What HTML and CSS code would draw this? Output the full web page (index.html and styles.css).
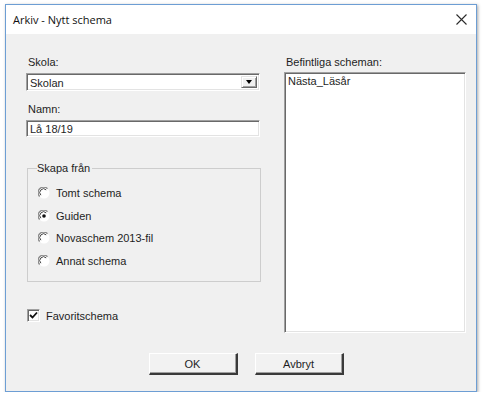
FILE: index.html
```html
<!DOCTYPE html>
<html lang="sv">
<head>
<meta charset="utf-8">
<title>Arkiv - Nytt schema</title>
<link rel="stylesheet" href="styles.css">
</head>
<body>
<div class="window">
  <div class="titlebar">
    <span class="title">Arkiv - Nytt schema</span>
    <svg class="close" width="11" height="11" viewBox="0 0 11 11"><path d="M0.5 0.5 L10.5 10.5 M10.5 0.5 L0.5 10.5" stroke="#2b2b2b" stroke-width="1.1" fill="none"/></svg>
  </div>
  <div class="body">
    <div class="main">
      <div class="left">
        <div class="label">Skola:</div>
        <div class="combo sunken">
          <span class="combo-text">Skolan</span>
          <span class="drop raised"><span class="tri"></span></span>
        </div>
        <div class="label label-namn">Namn:</div>
        <div class="input sunken">Lå 18/19</div>
        <fieldset class="group">
          <legend class="legend">Skapa från</legend>
          <div class="radio-row">
            <svg class="radio" width="12" height="12" viewBox="0 0 12 12"><circle cx="6" cy="6" r="5.5" fill="#fff"/><path d="M1.7 9.5 A5 5 0 0 1 9.5 1.7" stroke="#8a8a8a" stroke-width="1.3" fill="none"/><path d="M2.9 8.2 A3.6 3.6 0 0 1 8.2 2.9" stroke="#444" stroke-width="1" fill="none"/></svg>
            <span>Tomt schema</span>
          </div>
          <div class="radio-row">
            <svg class="radio" width="12" height="12" viewBox="0 0 12 12"><circle cx="6" cy="6" r="5.5" fill="#fff"/><path d="M1.7 9.5 A5 5 0 0 1 9.5 1.7" stroke="#8a8a8a" stroke-width="1.3" fill="none"/><path d="M2.9 8.2 A3.6 3.6 0 0 1 8.2 2.9" stroke="#444" stroke-width="1" fill="none"/><circle cx="6" cy="6" r="1.8" fill="#111"/></svg>
            <span>Guiden</span>
          </div>
          <div class="radio-row">
            <svg class="radio" width="12" height="12" viewBox="0 0 12 12"><circle cx="6" cy="6" r="5.5" fill="#fff"/><path d="M1.7 9.5 A5 5 0 0 1 9.5 1.7" stroke="#8a8a8a" stroke-width="1.3" fill="none"/><path d="M2.9 8.2 A3.6 3.6 0 0 1 8.2 2.9" stroke="#444" stroke-width="1" fill="none"/></svg>
            <span>Novaschem 2013-fil</span>
          </div>
          <div class="radio-row">
            <svg class="radio" width="12" height="12" viewBox="0 0 12 12"><circle cx="6" cy="6" r="5.5" fill="#fff"/><path d="M1.7 9.5 A5 5 0 0 1 9.5 1.7" stroke="#8a8a8a" stroke-width="1.3" fill="none"/><path d="M2.9 8.2 A3.6 3.6 0 0 1 8.2 2.9" stroke="#444" stroke-width="1" fill="none"/></svg>
            <span>Annat schema</span>
          </div>
        </fieldset>
        <div class="check-row">
          <span class="checkbox sunken">
            <svg width="9" height="9" viewBox="0 0 9 9"><path d="M1 4 L3.5 6.5 L8 1.5" stroke="#111" stroke-width="1.8" fill="none"/></svg>
          </span>
          <span>Favoritschema</span>
        </div>
      </div>
      <div class="right">
        <div class="label">Befintliga scheman:</div>
        <div class="listbox sunken">
          <div class="list-item">Nästa_Läsår</div>
        </div>
      </div>
    </div>
    <div class="footer">
      <div class="btn btn-ok">OK</div>
      <div class="btn btn-cancel">Avbryt</div>
    </div>
  </div>
</div>
</body>
</html>
```
FILE: styles.css
```css
html, body {
  margin: 0;
  padding: 0;
  background: #ffffff;
}

body {
  font-family: "Liberation Sans", Arial, sans-serif;
  font-size: 11px;
  color: #1e1e1e;
}

.window {
  margin: 4px 0 0 5px;
  width: 470px;
  height: 386px;
  border: 1px solid #6d9ed4;
  box-shadow: 1px 1px 3px rgba(0, 0, 0, 0.35);
  display: flex;
  flex-direction: column;
  background: #f0f0f0;
}

.titlebar {
  height: 29px;
  flex: none;
  background: #ffffff;
  display: flex;
  align-items: center;
  justify-content: space-between;
  padding: 0 9px 0 7px;
}

.title {
  font-family: "Open Sans", "Noto Sans", sans-serif;
  font-size: 11px;
  color: #111;
}

.close {
  display: block;
}

.body {
  flex: 1;
  display: flex;
  flex-direction: column;
  padding: 22px 10px 0 20px;
}

.main {
  display: grid;
  grid-template-columns: 235px 182px;
  column-gap: 23px;
}

.left {
  display: flex;
  flex-direction: column;
}

.label {
  height: 13px;
  line-height: 13px;
  margin-left: 2px;
}

.label-namn {
  margin-top: 12px;
}

.sunken {
  border: 1px solid;
  border-color: #a0a0a0 #ffffff #ffffff #a0a0a0;
  box-shadow: inset 1px 1px 0 #696969, inset -1px -1px 0 #e3e3e3;
  background: #ffffff;
}

.raised {
  border: 1px solid;
  border-color: #e3e3e3 #696969 #696969 #e3e3e3;
  box-shadow: inset 1px 1px 0 #ffffff, inset -1px -1px 0 #a0a0a0;
  background: #f0f0f0;
}

.combo {
  margin-top: 4px;
  width: 234px;
  height: 18px;
  box-sizing: border-box;
  display: flex;
  align-items: stretch;
  justify-content: space-between;
  padding: 2px;
}

.combo-text {
  line-height: 14px;
  padding-left: 1px;
}

.drop {
  width: 16px;
  box-sizing: border-box;
  display: flex;
  align-items: center;
  justify-content: center;
}

.tri {
  width: 0;
  height: 0;
  border-left: 3.5px solid transparent;
  border-right: 3.5px solid transparent;
  border-top: 4px solid #000;
}

.input {
  margin-top: 4px;
  width: 234px;
  height: 17px;
  box-sizing: border-box;
  padding: 2px 3px;
  line-height: 13px;
}

.group {
  margin: 25px 0 0 1px;
  width: 234px;
  box-sizing: border-box;
  border: 1px solid #cdcdcd;
  padding: 0 0 14px 10px;
  min-width: 0;
}

.legend {
  padding: 0 2px 0 0;
  margin-left: -1px;
  line-height: 13px;
}

.radio-row {
  display: flex;
  align-items: center;
  gap: 6px;
  height: 13px;
  margin-top: 11.5px;
}

.radio-row + .radio-row {
  margin-top: 9.5px;
}

.radio {
  display: block;
  flex: none;
}

.check-row {
  display: flex;
  align-items: center;
  gap: 6px;
  margin-top: 27px;
  margin-left: 1px;
  height: 13px;
}

.checkbox {
  width: 13px;
  height: 13px;
  box-sizing: border-box;
  display: flex;
  align-items: center;
  justify-content: center;
}

.checkbox svg {
  display: block;
}

.right {
  display: flex;
  flex-direction: column;
}

.listbox {
  margin-top: 3px;
  height: 261px;
  box-sizing: border-box;
  padding: 2px 3px;
}

.list-item {
  line-height: 13px;
}

.footer {
  margin-top: 20px;
  display: flex;
  justify-content: center;
  gap: 17px;
}

.btn {
  width: 89px;
  height: 22px;
  box-sizing: border-box;
  display: flex;
  align-items: center;
  justify-content: center;
  background: #f2f2f2;
  border-top: 1px solid #ffffff;
  border-left: 1px solid #ffffff;
  border-right: 2px solid #3a3a3a;
  border-bottom: 2px solid #3a3a3a;
  box-shadow: inset -1px -1px 0 #a0a0a0;
}
```
